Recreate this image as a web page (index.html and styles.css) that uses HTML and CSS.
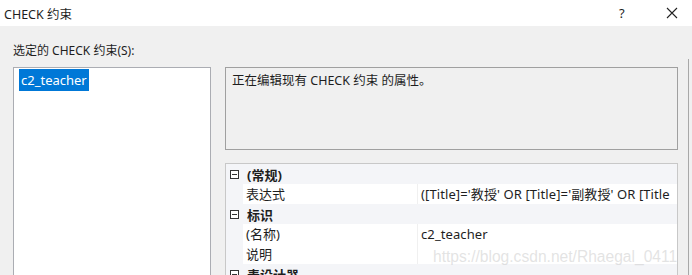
FILE: index.html
```html
<!DOCTYPE html>
<html>
  <head>
    <meta charset="UTF-8">
    <title>CHECK 约束</title>
    <link rel="stylesheet" href="styles.css">
  </head>
  <body>
    <div class="titlebar">
      <span class="title">CHECK 约束</span>
      <span class="help">?</span>
      <span class="close">
        <svg width="12" height="12" viewBox="0 0 12 12"><path d="M1 1 L11 11 M11 1 L1 11" stroke="#222" stroke-width="1.1" fill="none"/></svg>
      </span>
    </div>

    <div class="dialog">
      <div class="caption">选定的 CHECK 约束(S):</div>
      <div class="main">
        <div class="listbox">
          <div class="item selected">c2_teacher</div>
        </div>
        <div class="side">
          <div class="desc">正在编辑现有 CHECK 约束 的属性。</div>
          <div class="grid">
            <div class="row cat"><span class="toggle"></span><b>(常规)</b></div>
            <div class="row prop"><span class="name">表达式</span><span class="value">([Title]='教授' OR [Title]='副教授' OR [Title</span></div>
            <div class="row cat"><span class="toggle"></span><b>标识</b></div>
            <div class="row prop"><span class="name">(名称)</span><span class="value">c2_teacher</span></div>
            <div class="row prop"><span class="name">说明</span><span class="value"></span></div>
            <div class="row cat"><span class="toggle"></span><b>表设计器</b></div>
          </div>
        </div>
        <div class="edge"></div>
      </div>
    </div>

    <div class="watermark">https://blog.csdn.net/Rhaegal_0411</div>
  </body>
</html>
```

FILE: styles.css
```css
* {
  box-sizing: border-box;
}
body {
  margin: 0;
  width: 692px;
  height: 275px;
  overflow: hidden;
  position: relative;
  background: #f0f0f0;
  font-family: "Noto Sans", "Noto Sans CJK SC", sans-serif;
  font-size: 12px;
  color: #1e1e1e;
}
.titlebar {
  height: 26px;
  background: #fff;
  display: flex;
  align-items: center;
  padding: 0 14px 0 4px;
}
.title {
  flex: 1;
  font-size: 12.5px;
}
.help {
  width: 12px;
  margin-right: 35px;
  font-size: 13px;
}
.close {
  display: flex;
}
.dialog {
  padding: 16px 0 0 13px;
}
.caption {
  height: 25px;
  line-height: 18px;
}
.main {
  display: flex;
  align-items: flex-start;
}
.listbox {
  flex: none;
  width: 198px;
  height: 240px;
  background: #fff;
  border: 1px solid #abadb3;
  padding: 1px 5px;
}
.item {
  display: inline-block;
  padding: 0 2px;
  height: 22px;
  line-height: 22px;
  font-size: 13px;
}
.item.selected {
  background: #0078d7;
  color: #fff;
}
.side {
  flex: none;
  width: 453px;
  margin-left: 14px;
  display: flex;
  flex-direction: column;
  gap: 13px;
}
.desc {
  height: 83px;
  border: 1px solid #a0a0a0;
  padding: 4px 6px;
  line-height: 18px;
  font-size: 12.5px;
}
.grid {
  border: 1px solid #c8c8c8;
  background: #f4f5f8;
  height: 142px;
  font-size: 13px;
}
.row {
  height: 20px;
  display: flex;
  align-items: center;
}
.cat b {
  margin-left: 8px;
}
.toggle {
  margin-left: 4px;
  width: 9px;
  height: 9px;
  border: 1px solid #333;
  position: relative;
  background: #fff;
}
.toggle::after {
  content: "";
  position: absolute;
  left: 1px;
  right: 1px;
  top: 3px;
  height: 1px;
  background: #333;
}
.prop {
  margin-left: 17px;
  background: #fff;
}
.name {
  width: 175px;
  padding-left: 3px;
  border-right: 1px solid #f0f0f0;
  height: 20px;
  line-height: 20px;
}
.value {
  flex: 1;
  min-width: 0;
  padding-left: 3px;
  white-space: nowrap;
  overflow: hidden;
  height: 20px;
  line-height: 20px;
  letter-spacing: 0.1px;
}
.edge {
  flex: none;
  width: 1px;
  height: 240px;
  margin-left: 10px;
  margin-top: -8px;
  background: #a8a8a8;
}
.watermark {
  position: absolute;
  left: 433px;
  top: 248px;
  font-family: "Liberation Sans", sans-serif;
  font-size: 15.6px;
  color: rgba(200, 200, 200, 0.5);
  white-space: nowrap;
}
```
